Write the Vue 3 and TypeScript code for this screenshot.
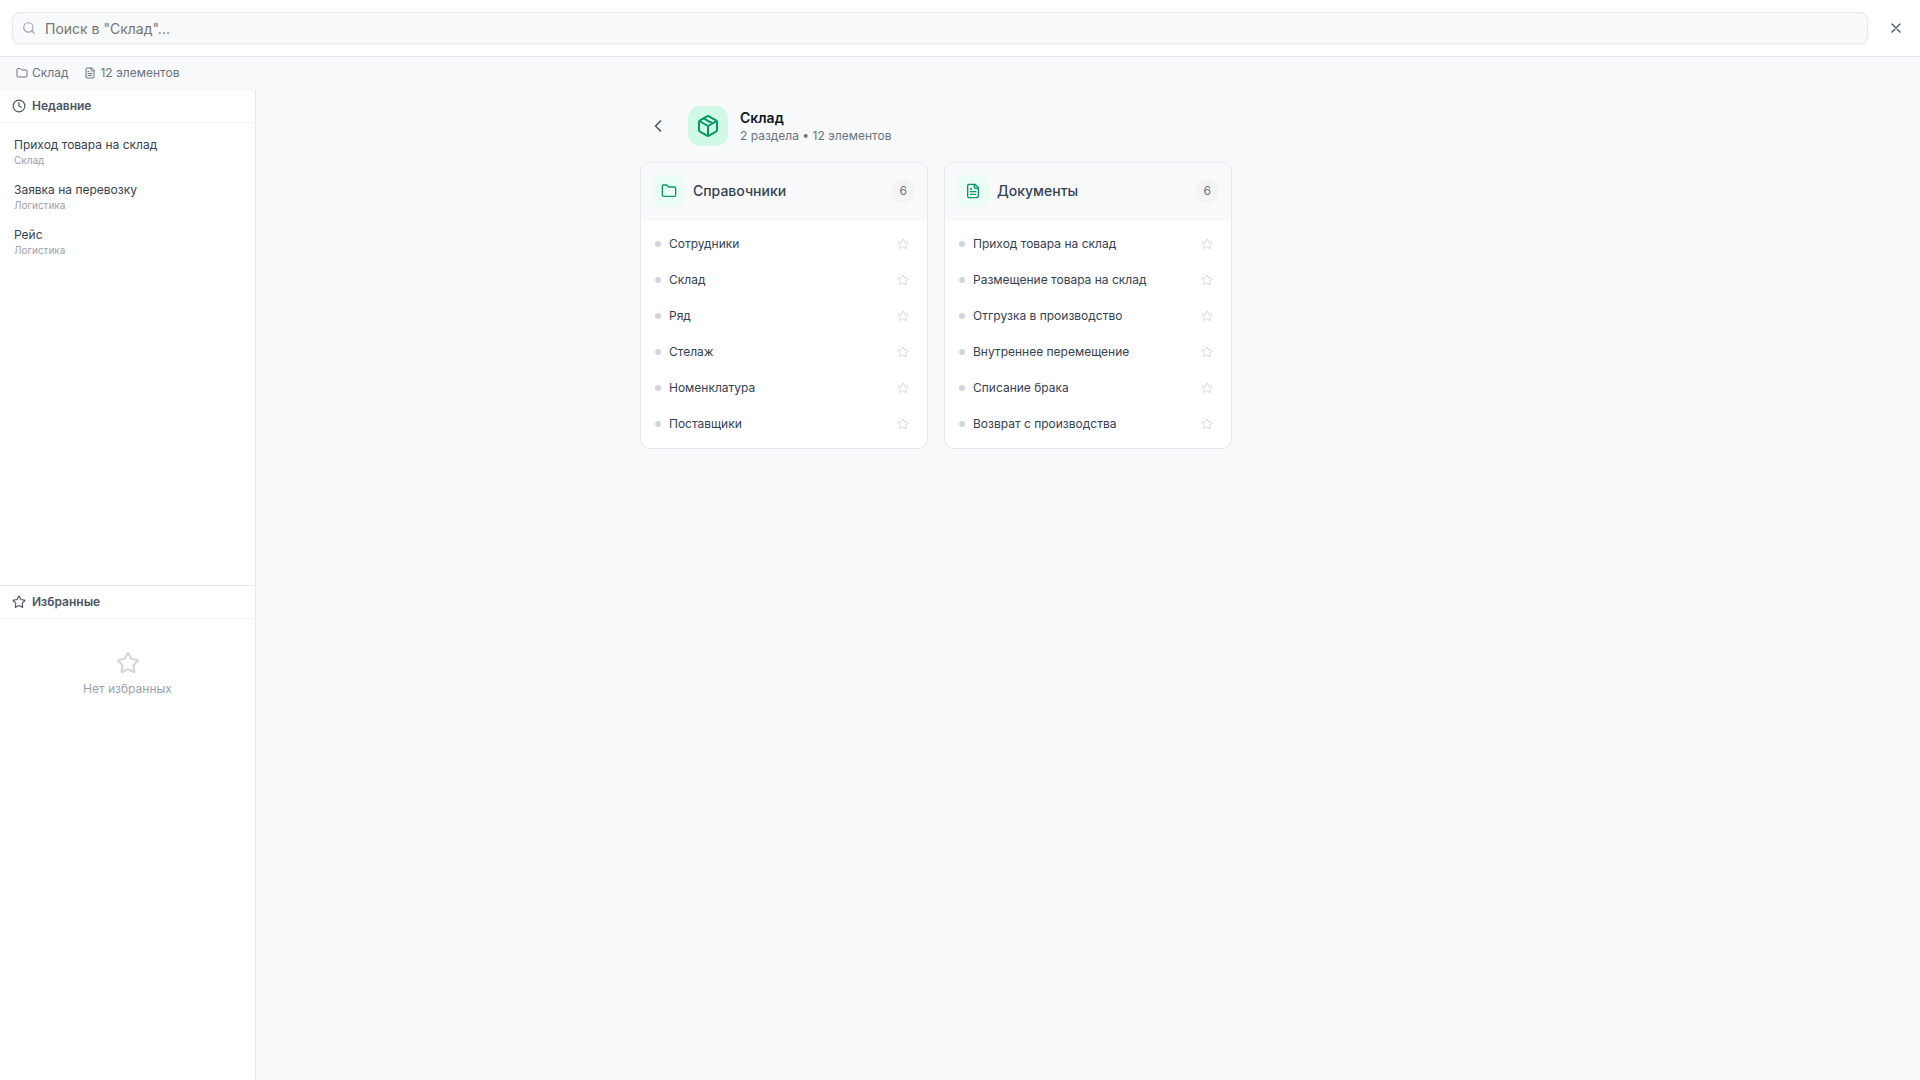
<script setup lang="ts">
import { ref } from 'vue'

interface RecentItem {
  title: string
  section: string
}

interface Section {
  title: string
  icon: 'folder' | 'file'
  items: string[]
}

const query = ref('')

const recent: RecentItem[] = [
  { title: 'Приход товара на склад', section: 'Склад' },
  { title: 'Заявка на перевозку', section: 'Логистика' },
  { title: 'Рейс', section: 'Логистика' },
]

const sections: Section[] = [
  {
    title: 'Справочники',
    icon: 'folder',
    items: ['Сотрудники', 'Склад', 'Ряд', 'Стелаж', 'Номенклатура', 'Поставщики'],
  },
  {
    title: 'Документы',
    icon: 'file',
    items: [
      'Приход товара на склад',
      'Размещение товара на склад',
      'Отгрузка в производство',
      'Внутреннее перемещение',
      'Списание брака',
      'Возврат с производства',
    ],
  },
]

const starPath =
  'M11.525 2.295a.53.53 0 0 1 .95 0l2.31 4.679a2.123 2.123 0 0 0 1.595 1.16l5.166.756a.53.53 0 0 1 .294.904l-3.736 3.638a2.123 2.123 0 0 0-.611 1.878l.882 5.14a.53.53 0 0 1-.771.56l-4.618-2.428a2.122 2.122 0 0 0-1.973 0L6.396 21.01a.53.53 0 0 1-.77-.56l.881-5.139a2.122 2.122 0 0 0-.611-1.879L2.16 9.795a.53.53 0 0 1 .294-.906l5.165-.755a2.122 2.122 0 0 0 1.597-1.16z'
const folderPath =
  'M20 20a2 2 0 0 0 2-2V8a2 2 0 0 0-2-2h-7.9a2 2 0 0 1-1.69-.9L9.6 3.9A2 2 0 0 0 7.93 3H4a2 2 0 0 0-2 2v13a2 2 0 0 0 2 2Z'
const filePath =
  'M15 2H6a2 2 0 0 0-2 2v16a2 2 0 0 0 2 2h12a2 2 0 0 0 2-2V7ZM14 2v4a2 2 0 0 0 2 2h4M10 9H8M16 13H8M16 17H8'
</script>

<template>
  <div class="app">
    <header class="topbar">
      <div class="search">
        <svg class="icon search-icon" viewBox="0 0 24 24"><circle cx="11" cy="11" r="8" /><path d="m21 21-4.34-4.34" /></svg>
        <input v-model="query" class="search-input" type="text" aria-label="Поиск" placeholder="Поиск в &quot;Склад&quot;..." />
      </div>
      <button class="close" type="button" aria-label="Закрыть">
        <svg class="icon i16" viewBox="0 0 24 24"><path d="M18 6 6 18M6 6l12 12" /></svg>
      </button>
    </header>

    <div class="crumbs">
      <span class="crumb"><svg class="icon i12" viewBox="0 0 24 24"><path :d="folderPath" /></svg>Склад</span>
      <span class="crumb"><svg class="icon i12" viewBox="0 0 24 24"><path :d="filePath" /></svg>12 элементов</span>
    </div>

    <div class="body">
      <aside class="sidebar">
        <section class="panel">
          <h2 class="panel-title">
            <svg class="icon i14" viewBox="0 0 24 24"><circle cx="12" cy="12" r="10" /><path d="M12 6v6l4 2" /></svg>
            Недавние
          </h2>
          <ul class="recent">
            <li v-for="item in recent" :key="item.title">
              <a class="recent-link" href="#">
                <span class="recent-title">{{ item.title }}</span>
                <span class="recent-section">{{ item.section }}</span>
              </a>
            </li>
          </ul>
        </section>
        <section class="panel panel-favorites">
          <h2 class="panel-title">
            <svg class="icon i14" viewBox="0 0 24 24"><path :d="starPath" /></svg>
            Избранные
          </h2>
          <div class="empty">
            <svg class="icon i24" viewBox="0 0 24 24"><path :d="starPath" /></svg>
            <p>Нет избранных</p>
          </div>
        </section>
      </aside>

      <main class="main">
        <div class="content">
          <div class="heading">
            <button class="back" type="button" aria-label="Назад">
              <svg class="icon i20" viewBox="0 0 24 24"><path d="m15 18-6-6 6-6" /></svg>
            </button>
            <span class="heading-icon">
              <svg class="icon i24" viewBox="0 0 24 24"><path d="M11 21.73a2 2 0 0 0 2 0l7-4A2 2 0 0 0 21 16V8a2 2 0 0 0-1-1.73l-7-4a2 2 0 0 0-2 0l-7 4A2 2 0 0 0 3 8v8a2 2 0 0 0 1 1.73zM12 22V12M3.29 7 12 12l8.71-5M7.5 4.27l9 5.15" /></svg>
            </span>
            <div>
              <h1 class="heading-title">Склад</h1>
              <p class="heading-sub">2 раздела • 12 элементов</p>
            </div>
          </div>

          <div class="cards">
            <section v-for="section in sections" :key="section.title" class="card">
              <header class="card-head">
                <span class="card-icon">
                  <svg class="icon i16" viewBox="0 0 24 24"><path :d="section.icon === 'folder' ? folderPath : filePath" /></svg>
                </span>
                <h2 class="card-title">{{ section.title }}</h2>
                <span class="badge">{{ section.items.length }}</span>
              </header>
              <ul class="rows">
                <li v-for="item in section.items" :key="item" class="row">
                  <a class="row-link" href="#">{{ item }}</a>
                  <button class="star" type="button" :aria-label="'В избранное: ' + item">
                    <svg class="icon i12" viewBox="0 0 24 24"><path :d="starPath" /></svg>
                  </button>
                </li>
              </ul>
            </section>
          </div>
        </div>
      </main>
    </div>
  </div>
</template>

<style>
body {
  margin: 0;
  background: #f9fafb;
}
</style>

<style scoped>
.app {
  display: flex;
  flex-direction: column;
  min-height: 100vh;
  background: #f8fafc;
  color: #364153;
  font-family: Inter, "Noto Sans", sans-serif;
  font-size: 12px;
  line-height: 16px;
}
.app * {
  box-sizing: border-box;
}
h1, h2, p, ul {
  margin: 0;
  padding: 0;
}
ul {
  list-style: none;
}
a {
  color: inherit;
  text-decoration: none;
}
button {
  display: flex;
  align-items: center;
  justify-content: center;
  padding: 0;
  border: 0;
  background: none;
  cursor: pointer;
}
.icon {
  flex: none;
  fill: none;
  stroke: currentColor;
  stroke-width: 2;
  stroke-linecap: round;
  stroke-linejoin: round;
}
.i12 { width: 12px; height: 12px; }
.i14 { width: 14px; height: 14px; }
.i16 { width: 16px; height: 16px; }
.i20 { width: 20px; height: 20px; }
.i24 { width: 24px; height: 24px; }

.topbar {
  display: flex;
  align-items: center;
  gap: 16px;
  padding: 12px;
  border-bottom: 1px solid #e5e7eb;
  background: #fff;
}
.search {
  display: flex;
  flex: 1;
  align-items: center;
  gap: 9px;
  height: 32px;
  padding: 0 9px;
  border: 1px solid #e5e7eb;
  border-radius: 8px;
  background: #f9fafb;
  box-shadow: 0 1px 2px rgba(0, 0, 0, 0.06);
}
.search-icon {
  width: 14px;
  height: 14px;
  color: #99a1af;
}
.search-input {
  flex: 1;
  height: 24px;
  padding: 0;
  border: 0;
  outline: 0;
  background: none;
  color: #364153;
  font: 14px/20px Inter, "Noto Sans", sans-serif;
}
.search-input::placeholder {
  color: #757575;
  opacity: 1;
}
.close {
  width: 24px;
  height: 24px;
  color: #4a5565;
}
.crumbs {
  display: flex;
  gap: 16px;
  padding: 8px 16px;
  border-bottom: 1px solid #f3f4f6;
  color: #6a7282;
}
.crumb {
  display: flex;
  align-items: center;
  gap: 4px;
}

.body {
  display: flex;
  flex: 1;
}
.sidebar {
  display: flex;
  flex: none;
  flex-direction: column;
  width: 256px;
  border-right: 1px solid #e5e7eb;
  background: #fff;
}
.panel {
  flex: 1 1 0;
}
.panel-favorites {
  border-top: 1px solid #e5e7eb;
}
.panel-title {
  display: flex;
  align-items: center;
  gap: 6px;
  padding: 8px 12px;
  border-bottom: 1px solid #f3f4f6;
  color: #4a5565;
  font-size: 12px;
  font-weight: 600;
  line-height: 16px;
}
.recent {
  padding: 8px;
}
.recent-link {
  display: block;
  padding: 6px;
}
.recent li + li {
  margin-top: 2px;
}
.recent-title,
.recent-section {
  display: block;
}
.recent-section {
  color: #99a1af;
  font-size: 10px;
  line-height: 15px;
}
.empty {
  display: flex;
  flex-direction: column;
  align-items: center;
  gap: 6px;
  padding: 32px 12px;
  color: #99a1af;
}
.empty .icon {
  color: #d1d5dc;
}

.main {
  flex: 1;
  padding: 16px;
}
.content {
  max-width: 896px;
  margin: 0 auto;
}
.heading {
  display: flex;
  align-items: center;
  gap: 12px;
  margin-bottom: 16px;
}
.back {
  width: 36px;
  height: 36px;
  color: #4a5565;
}
.heading-icon {
  display: flex;
  align-items: center;
  justify-content: center;
  width: 40px;
  height: 40px;
  border-radius: 12px;
  background: #d0fae5;
  color: #009966;
}
.heading-title {
  color: #101828;
  font-size: 14px;
  font-weight: 600;
  line-height: 20px;
}
.heading-sub {
  color: #6a7282;
}

.cards {
  display: grid;
  grid-template-columns: repeat(3, 1fr);
  gap: 16px;
}
.card {
  overflow: hidden;
  border: 1px solid #e5e7eb;
  border-radius: 10px;
  background: #fff;
}
.card-head {
  display: flex;
  align-items: center;
  gap: 8px;
  padding: 12px;
  border-bottom: 1px solid #f3f4f6;
  background: #f9fafb;
}
.card-icon {
  display: flex;
  align-items: center;
  justify-content: center;
  width: 32px;
  height: 32px;
  border-radius: 8px;
  background: #ecfdf5;
  color: #009966;
}
.card-title {
  flex: 1;
  font-size: 14px;
  font-weight: 500;
  line-height: 20px;
}
.badge {
  min-width: 23px;
  padding: 4px 8px;
  border-radius: 12px;
  background: #f3f4f6;
  color: #6a7282;
  text-align: center;
}
.rows {
  padding: 6px;
}
.row {
  display: flex;
  align-items: center;
  height: 36px;
  padding: 0 8px;
}
.row-link {
  display: flex;
  flex: 1;
  align-items: center;
  gap: 8px;
}
.row-link::before {
  width: 6px;
  height: 6px;
  border-radius: 3px;
  background: #d1d5dc;
  content: "";
}
.star {
  width: 20px;
  height: 20px;
  color: #d1d5dc;
}
</style>
